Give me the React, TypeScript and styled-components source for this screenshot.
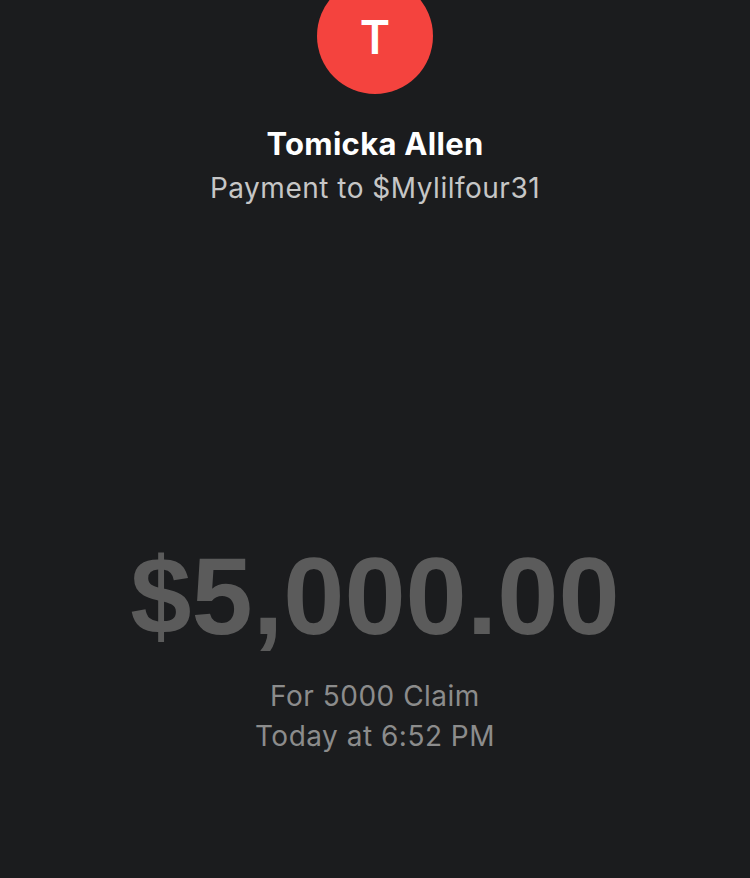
import React from "react";
import styled, { createGlobalStyle } from "styled-components";

const Global = createGlobalStyle`
  html, body { margin: 0; padding: 0; background: #1b1c1e; }
  body { font-family: Inter, "Liberation Sans", sans-serif; }
`;

const Screen = styled.div`
  width: 750px;
  height: 878px;
  background: #1b1c1e;
  overflow: hidden;
  display: flex;
  flex-direction: column;
  align-items: center;
`;

const Avatar = styled.div`
  width: 116px;
  height: 116px;
  margin-top: -22px;
  border-radius: 50%;
  background: #f4433e;
  color: #ffffff;
  display: flex;
  align-items: center;
  justify-content: center;
  padding-top: 2px;
  box-sizing: border-box;
  font-family: Inter, "Liberation Sans", sans-serif;
  font-weight: 600;
  font-size: 46px;
  line-height: 1;
`;

const Name = styled.div`
  margin-top: 32px;
  color: #ffffff;
  font-weight: 700;
  font-size: 31px;
  letter-spacing: 0.3px;
  line-height: 36px;
`;

const Sub = styled.div`
  margin-top: 10px;
  color: #c6c6c6;
  font-weight: 400;
  font-size: 28px;
  letter-spacing: 0.5px;
  line-height: 32px;
`;

const Amount = styled.div`
  margin-top: 337px;
  color: #5b5b5b;
  font-family: "Liberation Sans", Arial, sans-serif;
  font-weight: 700;
  font-size: 110px;
  line-height: 110px;
`;

const Meta = styled.div<{ $gap: number }>`
  margin-top: ${(p) => p.$gap}px;
  color: #8c8c8c;
  font-weight: 400;
  font-size: 28px;
  letter-spacing: 0.5px;
  line-height: 32px;
`;

export default function App() {
  return (
    <>
      <Global />
      <Screen>
        <Avatar>T</Avatar>
        <Name>Tomicka Allen</Name>
        <Sub>Payment to $Mylilfour31</Sub>
        <Amount>$5,000.00</Amount>
        <Meta $gap={29}>For 5000 Claim</Meta>
        <Meta $gap={8}>Today at 6:52 PM</Meta>
      </Screen>
    </>
  );
}
